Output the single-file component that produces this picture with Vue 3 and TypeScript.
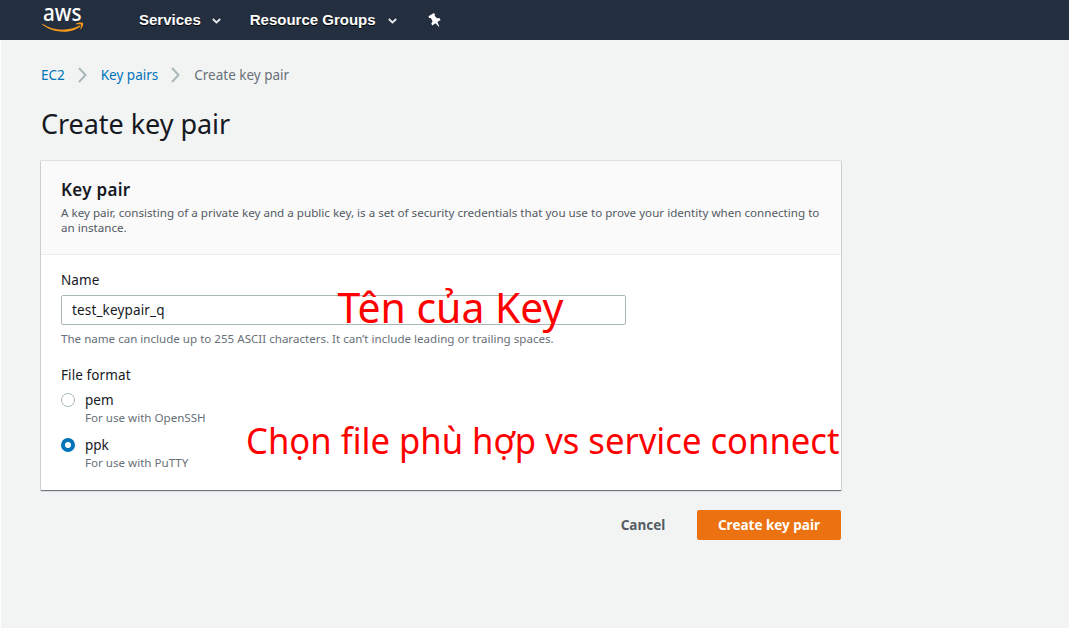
<script setup lang="ts">
import { ref } from 'vue'

interface KeyFormat {
  id: string
  hint: string
}

const navItems: string[] = ['Services', 'Resource Groups']
const formats: KeyFormat[] = [
  { id: 'pem', hint: 'For use with OpenSSH' },
  { id: 'ppk', hint: 'For use with PuTTY' },
]
const keyName = ref('test_keypair_q')
const selected = ref('ppk')
</script>

<template>
  <div class="page">
    <header class="topbar">
      <svg class="logo" width="43" height="28" viewBox="0 0 43 28" role="img" aria-label="aws">
        <text class="logo-text" x="1" y="14.8" textLength="38.5" lengthAdjust="spacingAndGlyphs">aws</text>
        <path d="M.3 17.800C11 25 27 25.500 37.500 19.500c.8-.4 1.300.3.7.9C30 27.500 12 28 .1 18.600Z" fill="#f79a1c" />
        <path d="M34 17.600c2-1.200 6-1.500 6.900-.7.8 1-.3 5-2.700 6.700.4-1.700 1.300-4.200.8-5-.6-.7-3.300-.4-5-.2Z" fill="#f79a1c" />
      </svg>
      <nav class="nav">
        <a v-for="(item, i) in navItems" :key="item" class="nav-item" :class="'nav-' + i">
          <span class="nav-label">{{ item }}</span>
          <svg width="9" height="6" viewBox="0 0 9 6"><path d="M.8 1 4.500 4.500 8.200 1" fill="none" stroke="#e8e9eb" stroke-width="1.800" /></svg>
        </a>
      </nav>
      <svg class="pin" width="14" height="15" viewBox="0 0 14 15">
        <path d="M.5 3.200 5.900.1l1.200 1.600-.5 1.100 2.400 2.500 2.300-.2 1.300 1.900-3.200 2 1.900 4.400-.5.300-3.200-3.500-3.400 2.200-.9-1.900 1.300-2.200-1.800-3.200-1.700-.2Z" fill="#fff" />
      </svg>
    </header>

    <main class="content">
      <nav class="crumbs">
        <a class="link">EC2</a>
        <svg width="9" height="16" viewBox="0 0 9 16"><path d="m1 1 6.500 7L1 15" /></svg>
        <a class="link">Key pairs</a>
        <svg width="9" height="16" viewBox="0 0 9 16"><path d="m1 1 6.500 7L1 15" /></svg>
        <span>Create key pair</span>
      </nav>
      <h1>Create key pair</h1>

      <section class="card">
        <div class="card-head">
          <h2>Key pair</h2>
          <p>A key pair, consisting of a private key and a public key, is a set of security credentials that you use to prove your identity when connecting to<br />an instance.</p>
        </div>
        <div class="card-body">
          <label class="label" for="key-name">Name</label>
          <input id="key-name" v-model="keyName" class="input" type="text" spellcheck="false" />
          <p class="hint name-hint">The name can include up to 255 ASCII characters. It can’t include leading or trailing spaces.</p>
          <div class="label format-label">File format</div>
          <div v-for="f in formats" :key="f.id" class="option" @click="selected = f.id">
            <span class="radio" :class="{ on: selected === f.id }"></span>
            <div>
              <div class="option-name">{{ f.id }}</div>
              <div class="hint option-hint">{{ f.hint }}</div>
            </div>
          </div>
        </div>
        <svg class="notes" width="801" height="330" viewBox="0 0 801 330">
          <text x="296.500" y="162" font-size="42" textLength="226" lengthAdjust="spacingAndGlyphs">Tên của Key</text>
          <text x="205" y="293" font-size="36" textLength="593.500" lengthAdjust="spacingAndGlyphs">Chọn file phù hợp vs service connect</text>
        </svg>
      </section>

      <div class="actions">
        <button class="cancel" type="button">Cancel</button>
        <button class="primary" type="button">Create key pair</button>
      </div>
    </main>
  </div>
</template>

<style>
body {
  margin: 0;
  background: #fff;
}
</style>

<style scoped>
.page {
  box-sizing: border-box;
  height: 628px;
  overflow: hidden;
  font-family: 'Noto Sans', sans-serif;
  color: #16191f;
}
.topbar {
  display: flex;
  align-items: flex-start;
  height: 40px;
  background: #232f3e;
}
.logo {
  margin: 6px 0 0 42px;
  overflow: visible;
}
.logo-text {
  font: 500 23px 'Noto Sans', sans-serif;
  fill: #fff;
}
.nav {
  display: flex;
  margin-left: 54px;
}
.nav-item {
  display: flex;
  align-items: center;
  height: 40px;
  font: bold 15px 'Liberation Sans', Arial, sans-serif;
  color: #fff;
  text-shadow: 0 1px 0 #000;
}
.nav-label {
  position: relative;
  top: -1px;
}
.nav-item svg {
  margin: 2px 0 0 11px;
}
.nav-1 {
  margin-left: 29px;
}
.nav-1 svg {
  margin-left: 12px;
}
.pin {
  margin: 13px 0 0 31px;
}
.content {
  box-sizing: border-box;
  height: 588px;
  margin-left: 1px;
  padding: 25px 0 0 40px;
  background: #f2f4f3;
}
.crumbs {
  display: flex;
  align-items: center;
  height: 20px;
  font-size: 13.5px;
  color: #687078;
}
.crumbs svg {
  margin: 0 14px 0 13px;
  fill: none;
  stroke: #aab7b8;
  stroke-width: 2;
}
.link {
  color: #0073bb;
}
h1 {
  margin: 20px 0 0;
  font-size: 27px;
  font-weight: 400;
  line-height: 38px;
  letter-spacing: -0.05px;
}
.card {
  position: relative;
  width: 800px;
  height: 329px;
  margin-top: 18px;
  background: #fff;
  box-shadow: 0 1px 1px #6b7980, 0 0 0 1px #dde1e1;
}
.card-head {
  box-sizing: border-box;
  height: 94px;
  padding: 17px 20px 0;
  background: #fafafa;
  border-bottom: 1px solid #eaeded;
}
h2 {
  margin: 0;
  font-size: 17px;
  font-weight: 600;
  line-height: 24px;
  letter-spacing: 0.3px;
}
.card-head p {
  margin: 3px 0 0;
  font-size: 11.64px;
  line-height: 15px;
  white-space: nowrap;
  color: #545b64;
}
.card-body {
  padding: 14px 20px 0;
}
.label {
  display: block;
  font-size: 13.5px;
  line-height: 22px;
  letter-spacing: 0.1px;
}
.input {
  display: block;
  box-sizing: border-box;
  width: 565px;
  height: 30px;
  margin-top: 4px;
  padding: 0 10px;
  font: 13.5px 'Noto Sans', sans-serif;
  letter-spacing: 0.15px;
  color: #16191f;
  background: #fff;
  border: 1px solid #aab7b8;
  border-radius: 2px;
  outline: 0;
}
.hint {
  margin: 0;
  font-size: 11.59px;
  line-height: 15px;
  white-space: nowrap;
  color: #687078;
}
.name-hint {
  margin-top: 6px;
}
.option-hint {
  margin-top: -1px;
}
.format-label {
  margin-top: 18px;
}
.option {
  display: flex;
  height: 45px;
  padding-top: 3px;
  box-sizing: border-box;
}
.radio {
  box-sizing: border-box;
  width: 14px;
  height: 14px;
  margin: 4px 10px 0 0;
  border: 1px solid #aab7b8;
  border-radius: 50%;
  background: #fff;
}
.radio.on {
  border: 4px solid #0073bb;
}
.option-name {
  font-size: 13.5px;
  line-height: 22px;
}
.notes {
  position: absolute;
  top: 0;
  left: 0;
  overflow: visible;
  pointer-events: none;
  fill: #f00;
  font-family: 'Noto Sans', sans-serif;
}
.actions {
  display: flex;
  justify-content: flex-end;
  width: 800px;
  margin-top: 20px;
}
button {
  height: 30px;
  padding: 0;
  font: 700 13.5px 'Noto Sans', sans-serif;
  border: 0;
  border-radius: 2px;
}
.cancel {
  width: 86px;
  margin-right: 11px;
  color: #545b64;
  background: transparent;
}
.primary {
  width: 144px;
  color: #fff;
  background: #ec7211;
}
</style>
